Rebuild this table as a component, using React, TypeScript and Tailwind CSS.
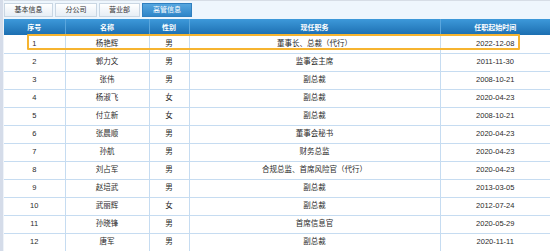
import React from 'react';

const tabs = ['基本信息', '分公司', '营业部', '高管信息'];
const tabWidths = [49, 42, 41, 50];

const rows: [string, string, string, string, string][] = [
  ['1', '杨艳辉', '男', '董事长、总裁（代行）', '2022-12-08'],
  ['2', '郭力文', '男', '监事会主席', '2011-11-30'],
  ['3', '张伟', '男', '副总裁', '2008-10-21'],
  ['4', '杨淑飞', '女', '副总裁', '2020-04-23'],
  ['5', '付立新', '女', '副总裁', '2008-10-21'],
  ['6', '张晨顺', '男', '董事会秘书', '2020-04-23'],
  ['7', '孙航', '男', '财务总监', '2020-04-23'],
  ['8', '刘占军', '男', '合规总监、首席风险官（代行）', '2020-04-23'],
  ['9', '赵培武', '男', '副总裁', '2013-03-05'],
  ['10', '武丽辉', '女', '副总裁', '2012-07-24'],
  ['11', '孙晓锋', '男', '首席信息官', '2020-05-29'],
  ['12', '唐军', '男', '副总裁', '2020-11-11'],
];

const cols = ['w-[61px]', 'w-[84px]', 'w-[40px]', 'w-[251px]', 'w-[110px]'];
const heads = ['序号', '名称', '性别', '现任职务', '任职起始时间'];

export default function App() {
  return (
    <div
      className="relative flex w-[550px] h-[251px] overflow-hidden bg-white"
      style={{ fontFamily: '"Liberation Sans", "Noto Sans CJK SC", sans-serif' }}
    >
      {/* left panel edge */}
      <div className="w-[3px] shrink-0 bg-[#d5dce9]" />
      <div className="w-[1px] shrink-0 bg-[#eef3f9]" />

      <div className="flex-1 flex flex-col">
        {/* tab bar */}
        <div className="h-[19px] shrink-0 border-t border-[#d6dde6] bg-[#eef6fd] flex items-start pt-[2px] gap-[2px]">
          {tabs.map((t, i) => (
            <div
              key={t}
              className={
                i === 3
                  ? 'h-[14px] shrink-0 whitespace-nowrap flex items-center justify-center text-[7px] text-white bg-gradient-to-b from-[#55a6df] to-[#2f86c9] border border-[#2f7fbf]'
                  : 'h-[14px] shrink-0 whitespace-nowrap flex items-center justify-center text-[7px] text-[#333] bg-gradient-to-b from-white to-[#e7eef5] border border-[#c9d6e3]'
              }
              style={{ width: tabWidths[i] }}
            >
              {t}
            </div>
          ))}
        </div>

        {/* table */}
        <table className="table-fixed border-collapse w-[546px]">
          <colgroup>
            {cols.map((c, i) => (
              <col key={i} className={c} />
            ))}
          </colgroup>
          <thead>
            <tr className="h-[16px] bg-gradient-to-b from-[#3d99da] to-[#1c6fb1]">
              {heads.map((h, i) => (
                <th
                  key={h}
                  className={
                    'p-0 text-[7px] font-bold text-white text-center leading-none ' +
                    (i < 4 ? 'border-r border-[#5aa6dd]' : '')
                  }
                >
                  {h}
                </th>
              ))}
            </tr>
          </thead>
          <tbody>
            {rows.map((r) => (
              <tr key={r[0]} className="h-[18px] border-b border-[#c6dcf1]">
                {r.map((c, i) => (
                  <td
                    key={i}
                    className={
                      'p-0 text-[7.5px] text-[#2a2a2a] text-center leading-none whitespace-nowrap ' +
                      (i < 4 ? 'border-r border-[#c6dcf1]' : '')
                    }
                  >
                    {c}
                  </td>
                ))}
              </tr>
            ))}
          </tbody>
        </table>
      </div>

      {/* highlight box on first row */}
      <div className="absolute left-[27px] top-[34px] w-[493px] h-[16px] border-2 border-[#f6b430] rounded-[1px]" />
    </div>
  );
}
